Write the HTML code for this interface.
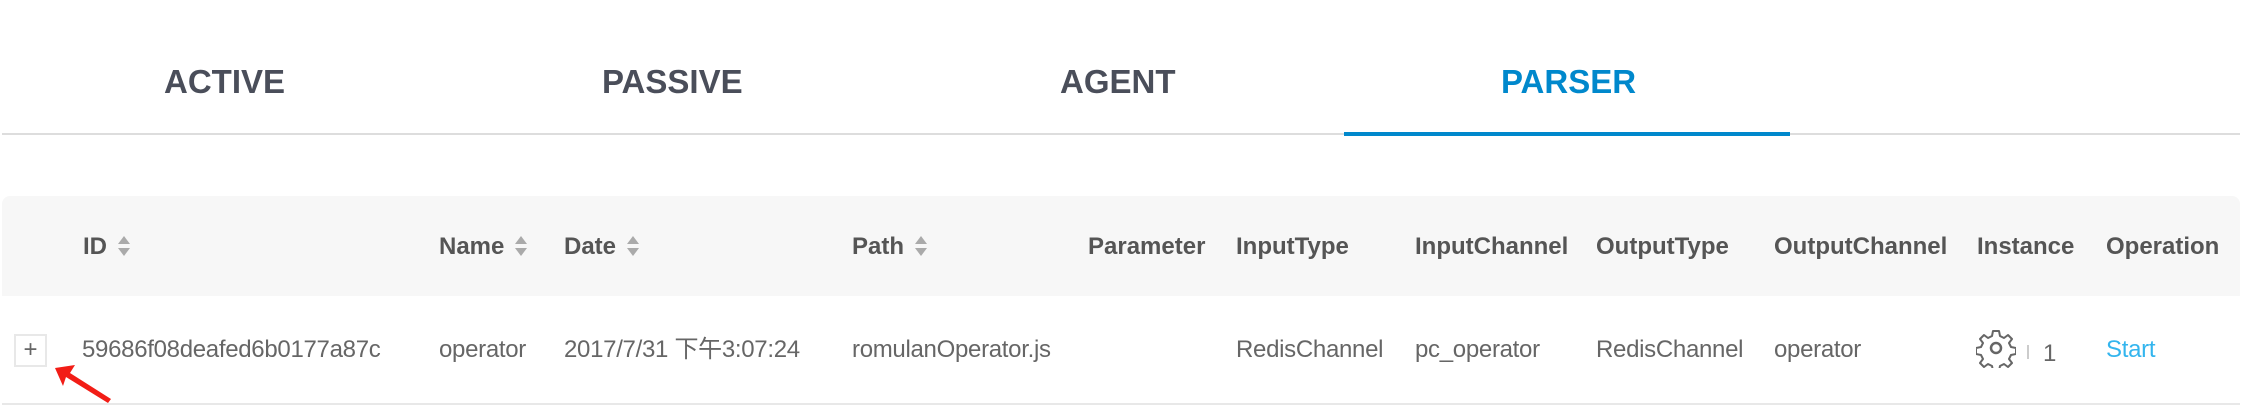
<!DOCTYPE html>
<html><head><meta charset="utf-8"><style>
*{margin:0;padding:0;box-sizing:border-box}
body{width:2254px;height:420px;background:#fff;position:relative;overflow:hidden;font-family:"Liberation Sans","Noto Sans CJK SC",sans-serif}
.a{position:absolute;white-space:nowrap}
.tab{top:64px;font-size:33px;font-weight:bold;color:#4a4e5a;line-height:36px}
.h{top:234px;font-size:24px;font-weight:bold;color:#555;line-height:26px}
.r{top:336px;font-size:24px;color:#666;line-height:28px;letter-spacing:-0.3px}
.sort{display:inline-block;vertical-align:middle;margin-left:10px;margin-top:-4px}
</style></head><body>
<div class="a tab" style="left:164px">ACTIVE</div>
<div class="a tab" style="left:602px">PASSIVE</div>
<div class="a tab" style="left:1060px">AGENT</div>
<div class="a tab" style="left:1501px;color:#0088cc">PARSER</div>
<div class="a" style="left:2px;top:133px;width:2238px;height:2px;background:#ddd"></div>
<div class="a" style="left:1344px;top:132px;width:446px;height:4px;background:#0088cc"></div>

<div class="a" style="left:2px;top:196px;width:2238px;height:100px;background:#f7f7f7;border-radius:8px 8px 0 0"></div>
<div class="a h" style="left:83px">ID<svg class="sort" width="14" height="22" viewBox="0 0 14 22"><path d="M7 1L13 9H1Z M7 21L13 13H1Z" fill="#aaa"/></svg></div>
<div class="a h" style="left:439px">Name<svg class="sort" width="14" height="22" viewBox="0 0 14 22"><path d="M7 1L13 9H1Z M7 21L13 13H1Z" fill="#aaa"/></svg></div>
<div class="a h" style="left:564px">Date<svg class="sort" width="14" height="22" viewBox="0 0 14 22"><path d="M7 1L13 9H1Z M7 21L13 13H1Z" fill="#aaa"/></svg></div>
<div class="a h" style="left:852px">Path<svg class="sort" width="14" height="22" viewBox="0 0 14 22"><path d="M7 1L13 9H1Z M7 21L13 13H1Z" fill="#aaa"/></svg></div>
<div class="a h" style="left:1088px">Parameter</div>
<div class="a h" style="left:1236px">InputType</div>
<div class="a h" style="left:1415px">InputChannel</div>
<div class="a h" style="left:1596px">OutputType</div>
<div class="a h" style="left:1774px">OutputChannel</div>
<div class="a h" style="left:1977px">Instance</div>
<div class="a h" style="left:2106px">Operation</div>

<div class="a" style="left:14px;top:334px;width:33px;height:33px;border:2px solid #e8e8e8;color:#666;font-size:24px;line-height:28px;text-align:center">+</div>
<div class="a r" style="left:82px">59686f08deafed6b0177a87c</div>
<div class="a r" style="left:439px">operator</div>
<div class="a r" style="left:564px">2017/7/31 下午3:07:24</div>
<div class="a r" style="left:852px">romulanOperator.js</div>
<div class="a r" style="left:1236px">RedisChannel</div>
<div class="a r" style="left:1415px">pc_operator</div>
<div class="a r" style="left:1596px">RedisChannel</div>
<div class="a r" style="left:1774px">operator</div>
<svg class="a" style="left:1976px;top:328px" width="40" height="40" viewBox="0 0 40 40"><path d="M17 3h6l1 5 4 2 4-3 4 4-3 4 2 4 5 1v6l-5 1-2 4 3 4-4 4-4-3-4 2-1 5h-6l-1-5-4-2-4 3-4-4 3-4-2-4-5-1v-6l5-1 2-4-3-4 4-4 4 3 4-2z" fill="none" stroke="#666" stroke-width="2" stroke-linejoin="round"/><circle cx="20" cy="20" r="5" fill="none" stroke="#666" stroke-width="2.5"/></svg>
<div class="a" style="left:2027px;top:345px;width:2px;height:14px;background:#ccc"></div>
<div class="a r" style="left:2043px;top:340px;color:#666">1</div>
<div class="a r" style="left:2106px;color:#33b5ee">Start</div>
<svg class="a" style="left:50px;top:362px" width="70" height="45" viewBox="0 0 70 45"><path d="M5 6L25 3L20 11L61 37L58 41L16 15L13 24Z" fill="#f21d16"/></svg>
<div class="a" style="left:2px;top:403px;width:2238px;height:2px;background:#e8e8e8"></div>
</body></html>
